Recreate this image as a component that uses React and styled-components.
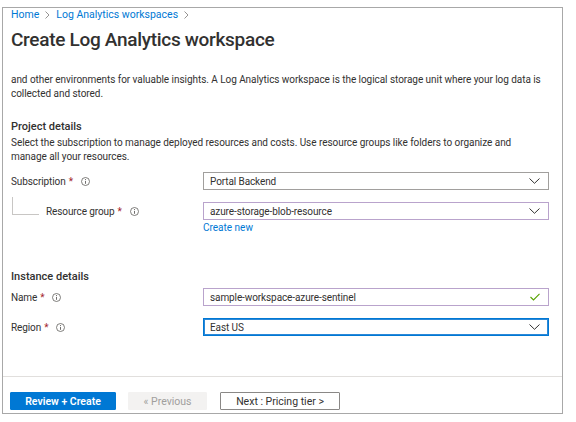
import React from 'react';
import styled, { createGlobalStyle } from 'styled-components';

const GlobalStyle = createGlobalStyle`
  body {
    margin: 0;
    background: #fff;
    font-family: "Segoe UI", Roboto, "Liberation Sans", sans-serif;
    color: #323130;
  }
`;

const Frame = styled.div`
  box-sizing: border-box;
  margin: 7px 0 0 2px;
  width: 561px;
  height: 407px;
  border: 1px solid #a8a8a8;
  display: flex;
  flex-direction: column;
`;

const Body = styled.div`
  flex: 1;
  padding: 0 13px 0 8px;
`;

const Breadcrumb = styled.div`
  display: flex;
  align-items: center;
  gap: 6px;
  font-size: 10.5px;
  line-height: 14px;
  color: #0078d4;
`;

const Title = styled.h1`
  margin: 5px 0 0;
  font-size: 19px;
  line-height: 26px;
  font-weight: 500;
  letter-spacing: -0.3px;
  color: #323130;
`;

const Text = styled.p`
  margin: ${p => p.$top}px 1px 0 0;
  font-size: 10px;
  letter-spacing: -0.05px;
  line-height: 14px;
`;

const SectionTitle = styled.h2`
  margin: ${p => p.$top}px 0 0;
  font-size: 11px;
  line-height: 14px;
  font-weight: 500;
`;

const FormRow = styled.div`
  display: grid;
  grid-template-columns: 192px 1fr;
  align-items: center;
  margin-top: ${p => p.$top}px;
`;

const Label = styled.div`
  display: flex;
  align-items: center;
  font-size: 10px;
  letter-spacing: -0.1px;
  color: #323130;
`;

const Connector = styled.span`
  align-self: flex-start;
  margin: -9px 7px 0 1px;
  width: 26px;
  height: 17px;
  border-left: 1px solid #c8c6c4;
  border-bottom: 1px solid #c8c6c4;
`;

const Req = styled.span`
  color: #a4262c;
  margin-left: 3px;
`;

const InfoWrap = styled.span`
  display: inline-flex;
  margin-left: 8px;
`;

const Field = styled.div`
  box-sizing: border-box;
  height: 18px;
  display: flex;
  align-items: center;
  justify-content: space-between;
  padding: 0 8px 0 6px;
  font-size: 10px;
  letter-spacing: -0.1px;
  border: 1px solid ${p => p.$border || '#a19f9d'};
  box-shadow: ${p => (p.$focus ? 'inset 0 0 0 1px #2b88d8' : 'none')};
`;

const Link = styled.span`
  display: block;
  margin-top: 1px;
  font-size: 10px;
  line-height: 14px;
  color: #0078d4;
`;

const Footer = styled.div`
  height: 37px;
  box-sizing: border-box;
  border-top: 1px solid #e1dfdd;
  padding: 15px 0 0 7px;
  display: flex;
  align-items: flex-start;
`;

const Button = styled.button`
  box-sizing: border-box;
  height: 18px;
  width: ${p => p.$w}px;
  margin-right: ${p => p.$mr || 0}px;
  padding: 0;
  font-family: inherit;
  font-size: 10.5px;
  border-radius: 1px;
  border: 1px solid ${p => (p.$variant === 'primary' ? '#0078d4' : p.$variant === 'disabled' ? '#f3f2f1' : '#8a8886')};
  background: ${p => (p.$variant === 'primary' ? '#0078d4' : p.$variant === 'disabled' ? '#f3f2f1' : '#fff')};
  color: ${p => (p.$variant === 'primary' ? '#fff' : p.$variant === 'disabled' ? '#a19f9d' : '#323130')};
  font-weight: ${p => (p.$variant === 'primary' ? 600 : 400)};
`;

const ChevronRight = () => (
  <svg width="5" height="8" viewBox="0 0 5 8">
    <polyline points="0.5,0.5 4,4 0.5,7.5" fill="none" stroke="#8a8886" strokeWidth="0.9" />
  </svg>
);

const ChevronDown = () => (
  <svg width="11" height="6" viewBox="0 0 11 6">
    <polyline points="0.5,0.5 5.5,5.3 10.5,0.5" fill="none" stroke="#323130" strokeWidth="1" />
  </svg>
);

const Check = () => (
  <svg width="10" height="8" viewBox="0 0 10 8">
    <polyline points="0.5,4 3.5,7 9.5,0.8" fill="none" stroke="#57a300" strokeWidth="1.1" />
  </svg>
);

const Info = () => (
  <InfoWrap>
    <svg width="9" height="9" viewBox="0 0 9 9">
      <circle cx="4.5" cy="4.5" r="4" fill="none" stroke="#605e5c" strokeWidth="0.8" />
      <line x1="4.5" y1="4" x2="4.5" y2="6.8" stroke="#605e5c" strokeWidth="0.9" />
      <circle cx="4.5" cy="2.6" r="0.55" fill="#605e5c" />
    </svg>
  </InfoWrap>
);

const FieldLabel = ({ children, tree }) => (
  <Label>
    {tree && <Connector />}
    {children}
    <Req>*</Req>
    <Info />
  </Label>
);

export default function App() {
  return (
    <>
      <GlobalStyle />
      <Frame>
        <Body>
          <Breadcrumb>
            <span>Home</span>
            <ChevronRight />
            <span>Log Analytics workspaces</span>
            <ChevronRight />
          </Breadcrumb>
          <Title>Create Log Analytics workspace</Title>
          <Text $top={20}>
            and other environments for valuable insights. A Log Analytics workspace is the logical storage unit where your log data is
            collected and stored.
          </Text>

          <SectionTitle $top={19}>Project details</SectionTitle>
          <Text $top={2}>
            Select the subscription to manage deployed resources and costs. Use resource groups like folders to organize and
            manage all your resources.
          </Text>
          <FormRow $top={8}>
            <FieldLabel>Subscription</FieldLabel>
            <Field>
              <span>Portal Backend</span>
              <ChevronDown />
            </Field>
          </FormRow>
          <FormRow $top={12}>
            <FieldLabel tree>Resource group</FieldLabel>
            <Field $border="#b9a3cc">
              <span>azure-storage-blob-resource</span>
              <ChevronDown />
            </Field>
          </FormRow>
          <FormRow $top={0}>
            <span />
            <Link>Create new</Link>
          </FormRow>

          <SectionTitle $top={35}>Instance details</SectionTitle>
          <FormRow $top={4}>
            <FieldLabel>Name</FieldLabel>
            <Field $border="#b9a3cc">
              <span>sample-workspace-azure-sentinel</span>
              <Check />
            </Field>
          </FormRow>
          <FormRow $top={12}>
            <FieldLabel>Region</FieldLabel>
            <Field $border="#0078d4" $focus>
              <span>East US</span>
              <ChevronDown />
            </Field>
          </FormRow>
        </Body>
        <Footer>
          <Button $variant="primary" $w={106} $mr={12}>Review + Create</Button>
          <Button $variant="disabled" $w={79} $mr={13}>« Previous</Button>
          <Button $w={120}>Next : Pricing tier &gt;</Button>
        </Footer>
      </Frame>
    </>
  );
}
